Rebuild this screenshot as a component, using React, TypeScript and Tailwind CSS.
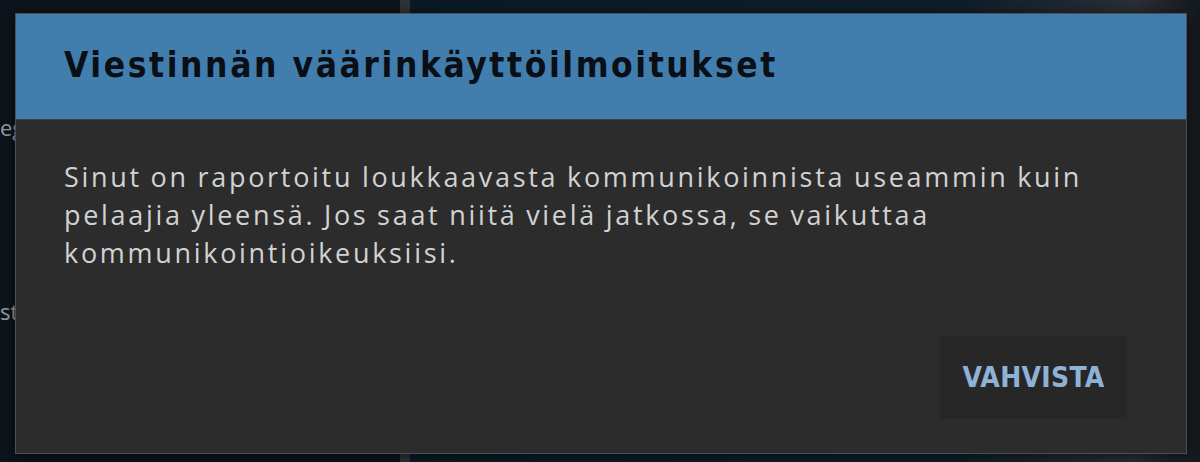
import React from "react";

export default function App() {
  return (
    <div className="relative w-[1200px] h-[462px] overflow-hidden bg-[#0e141b]">
      {/* taustanäkymä */}
      <div className="absolute inset-y-0 left-[400px] w-[10px] bg-[#2f3336]" />
      <div className="absolute inset-y-0 left-[410px] right-0 bg-[linear-gradient(90deg,#0b1a26_0%,#0f1e2a_70%,#2a2f35_92%,#14191e_100%)]" />
      <div className="absolute left-0 top-[116px] text-[22px] text-[#9aa0a6] font-['Open_Sans',sans-serif] leading-none">eg</div>
      <div className="absolute left-0 top-[300px] text-[22px] text-[#9aa0a6] font-['Open_Sans',sans-serif] leading-none">st</div>

      {/* dialogi */}
      <div className="absolute left-[15px] top-[13px] w-[1172px] h-[441px] flex flex-col border border-[#4d4f52] bg-[#2c2c2c] shadow-[0_2px_12px_rgba(0,0,0,0.6)]">
        <div className="h-[106px] shrink-0 bg-[#427ead] border-b border-[#37414b] flex items-center pl-[48px]">
          <h1 className="text-[35px] font-bold tracking-[2.6px] text-[#0a0f16] font-['DejaVu_Sans_Condensed','DejaVu_Sans',sans-serif] pb-[2px]">
            Viestinnän väärinkäyttöilmoitukset
          </h1>
        </div>
        <div className="flex-1 flex flex-col px-[48px] pt-[38px] pb-[34px]">
          <p className="text-[27px] leading-[38px] tracking-[2.7px] [word-spacing:-1px] text-[#d2d2d2] font-['Open_Sans',sans-serif] max-w-[1060px]">
            Sinut on raportoitu loukkaavasta kommunikoinnista useammin kuin pelaajia yleensä. Jos saat niitä vielä jatkossa, se vaikuttaa kommunikointioikeuksiisi.
          </p>
          <div className="mt-auto flex justify-end pr-[11px]">
            <button className="h-[83px] w-[187px] bg-[#272727] text-[28px] font-bold tracking-[0.3px] text-[#8eb1d6] font-['DejaVu_Sans_Condensed','DejaVu_Sans',sans-serif]">
              VAHVISTA
            </button>
          </div>
        </div>
      </div>
    </div>
  );
}
